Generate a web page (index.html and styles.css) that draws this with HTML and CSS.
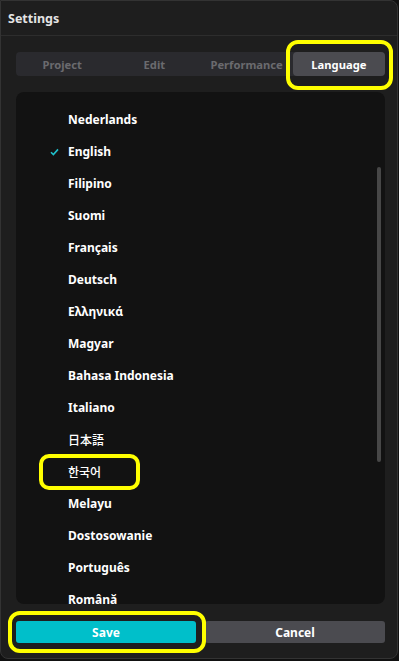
FILE: index.html
```html
<!DOCTYPE html>
<html lang="en">
<head>
    <meta charset="UTF-8">
    <meta name="viewport" content="width=device-width, initial-scale=1.0">
    <title>Settings</title>
    <link rel="stylesheet" href="styles.css">
</head>
<body>
    <div class="window">
        <div class="header">Settings</div>

        <div class="content">
            <div class="tabs">
                <div class="tab">Project</div>
                <div class="tab">Edit</div>
                <div class="tab">Performance</div>
                <div class="tab active">Language</div>
            </div>

            <div class="panel">
                <ul class="languages">
                    <li>Nederlands</li>
                    <li class="selected">
                        <svg class="check" width="9" height="8" viewBox="0 0 9 8">
                            <path d="M1 4.2 L3.4 6.6 L8 1.4" fill="none" stroke="#1fbfca" stroke-width="1.6"/>
                        </svg>
                        English
                    </li>
                    <li>Filipino</li>
                    <li>Suomi</li>
                    <li>Français</li>
                    <li>Deutsch</li>
                    <li>Ελληνικά</li>
                    <li>Magyar</li>
                    <li>Bahasa Indonesia</li>
                    <li>Italiano</li>
                    <li class="cjk">日本語</li>
                    <li class="cjk">한국어</li>
                    <li>Melayu</li>
                    <li>Dostosowanie</li>
                    <li>Português</li>
                    <li>Română</li>
                    <li>Русский</li>
                </ul>
                <div class="scrollbar"></div>
            </div>

            <div class="actions">
                <button class="btn save">Save</button>
                <button class="btn cancel">Cancel</button>
            </div>
        </div>

        <!-- yellow annotation marks -->
        <div class="mark mark-tab"></div>
        <div class="mark mark-korean"></div>
        <div class="mark mark-save"></div>
    </div>
</body>
</html>
```

FILE: styles.css
```css
body {
    margin: 0;
    background: #111;
    font-family: "Noto Sans", "Noto Sans CJK KR", sans-serif;
}
.window {
    position: relative;
    width: 396px;
    height: 657px;
    background: #1e1e1e;
    border: 1px solid #333;
    border-radius: 0 8px 8px 8px;
    display: flex;
    flex-direction: column;
    overflow: hidden;
}
.header {
    height: 35px;
    padding-left: 7px;
    line-height: 36px;
    font-size: 12.5px;
    font-weight: 700;
    color: #e4e4e4;
    border-bottom: 1px solid #2d2d2d;
    box-sizing: border-box;
}
.content {
    padding: 16px 12px 0 15px;
    display: flex;
    flex-direction: column;
}
.tabs {
    display: grid;
    grid-template-columns: repeat(4, 1fr);
    height: 24px;
    background: #2a2a2e;
    border-radius: 4px;
}
.tab {
    display: flex;
    align-items: center;
    justify-content: center;
    font-size: 11.2px;
    font-weight: 700;
    color: #6a6a6e;
    border-radius: 4px;
}
.tab.active {
    background: #4b4b50;
    color: #fff;
}
.panel {
    position: relative;
    margin-top: 16px;
    height: 512px;
    background: #121212;
    border-radius: 8px;
    overflow: hidden;
}
.languages {
    list-style: none;
    margin: 0;
    padding: 12px 0 0 0;
}
.languages li {
    position: relative;
    height: 32px;
    line-height: 32px;
    padding-left: 52px;
    font-size: 12px;
    font-weight: 700;
    color: #fff;
}
.languages li.cjk {
    font-family: "Noto Sans CJK KR", sans-serif;
    font-weight: 500;
}
.check {
    position: absolute;
    left: 34px;
    top: 12px;
}
.scrollbar {
    position: absolute;
    right: 4px;
    top: 75px;
    width: 4px;
    height: 295px;
    background: #474747;
    border-radius: 2px;
}
.actions {
    display: flex;
    gap: 9px;
    margin-top: 17px;
}
.btn {
    flex: 1;
    height: 22px;
    border: none;
    border-radius: 3px;
    font-family: "Noto Sans", sans-serif;
    font-size: 12px;
    font-weight: 700;
    color: #fff;
    padding: 0;
}
.save {
    background: #00bfca;
}
.cancel {
    background: #4b4b50;
}
.mark {
    position: absolute;
    border: 4px solid #ffff00;
    border-radius: 12px;
    box-sizing: border-box;
}
.mark-tab {
    left: 285px;
    top: 39px;
    width: 107px;
    height: 50px;
}
.mark-korean {
    left: 38px;
    top: 453px;
    width: 101px;
    height: 36px;
    border-radius: 10px;
}
.mark-save {
    left: 7px;
    top: 610px;
    width: 198px;
    height: 42px;
}
```
